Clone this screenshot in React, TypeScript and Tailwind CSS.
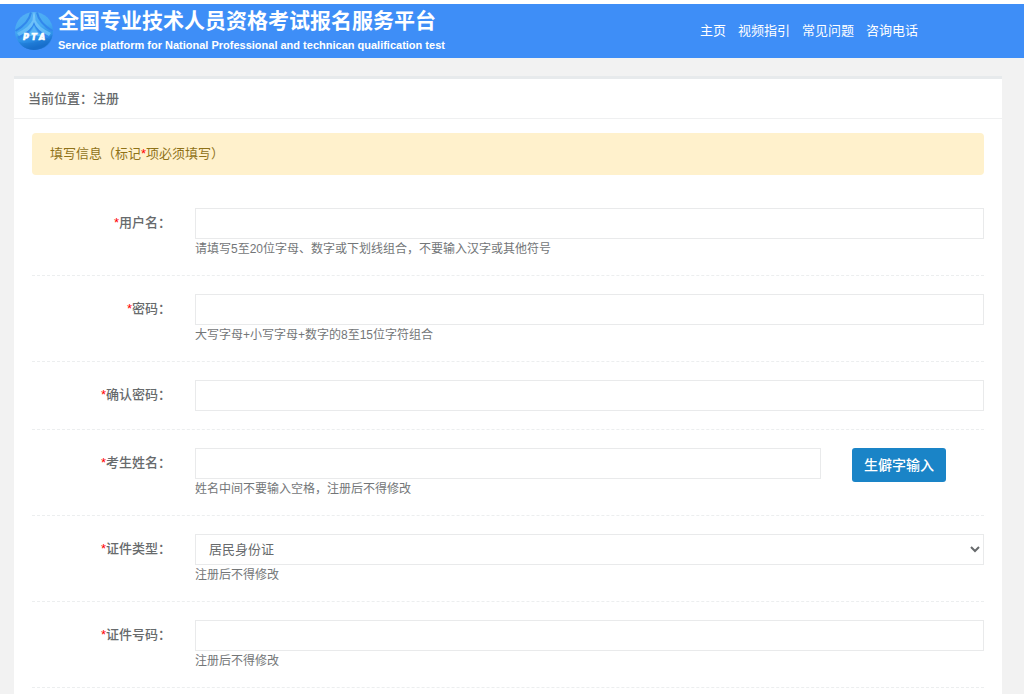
import type { ReactNode } from 'react';

const NAV = ['主页', '视频指引', '常见问题', '咨询电话'];

const CONTROL =
  'block h-[31px] w-full border border-[#e9eaeb] bg-white px-[9px] text-[13px] text-[#676a6c] outline-none focus:border-[#1a84c7]';

function Logo() {
  return (
    <svg viewBox="0 0 40 40" className="h-10 w-10 shrink-0" aria-hidden="true">
      <defs>
        <linearGradient id="disc" x1="0" y1="0" x2="0.25" y2="1">
          <stop offset="0" stopColor="#55b0f5" />
          <stop offset="0.5" stopColor="#45a9f3" />
          <stop offset="0.8" stopColor="#2a8de6" />
          <stop offset="1" stopColor="#1263c0" />
        </linearGradient>
        <linearGradient id="ray" x1="0" y1="0" x2="0" y2="1">
          <stop offset="0" stopColor="#7cc9fa" />
          <stop offset="1" stopColor="#5cb9f7" />
        </linearGradient>
      </defs>
      <circle cx="20" cy="20" r="19" fill="url(#disc)" />
      {/* dark gaps between the beams */}
      <path d="M17 1.500Q15 12 1.500 20M23 1.500Q25 12 38.500 20" fill="none" stroke="#3288ec" strokeWidth="2" />
      <path d="M20 9Q18 20 4 27M20 9Q22 20 36 27" fill="none" stroke="#3288ec" strokeWidth="3" />
      <path d="M20 1Q21 3 21.500 9Q24 16 37 22L35 25Q22 19 20 11Q18 19 5 25L3 22Q16 16 18.500 9Q19 3 20 1Z" fill="url(#ray)" />
      <path d="M20 15Q22 21 29 25H11Q18 21 20 15Z" fill="#58b4f6" />
      <path d="M5 31Q20 36 38.500 24Q37 38 20 39Q10 39 5 31Z" fill="#1d79d6" opacity="0.5" />
      <g
        textAnchor="middle"
        fontFamily="DejaVu Sans, sans-serif"
        fontSize="8"
        fontWeight="700"
        fontStyle="italic"
        fill="#fff"
        stroke="#fff"
        strokeWidth="0.6"
      >
        <text x="12" y="29">P</text>
        <text x="20" y="29">T</text>
        <text x="28" y="29">A</text>
      </g>
    </svg>
  );
}

function Star() {
  return <span className="font-normal text-[#ff0000]">*</span>;
}

function Row({
  id,
  label,
  hint,
  action,
  children,
}: {
  id: string;
  label: string;
  hint?: string;
  action?: ReactNode;
  children: ReactNode;
}) {
  return (
    <div className="grid grid-cols-[163px_1fr] border-b border-dashed border-[#eceeef] pt-[18px]">
      <label htmlFor={id} className="pr-6 text-right leading-[29px] font-medium">
        <Star />
        {label}：
      </label>
      <div className="flex items-start">
        <div className="min-w-0 flex-1">
          {children}
          {hint ? (
            <p id={`${id}-hint`} className="pb-4 text-xs leading-5 text-[#737678]">
              {hint}
            </p>
          ) : (
            <div className="h-[18px]" />
          )}
        </div>
        {action}
      </div>
    </div>
  );
}

export default function App() {
  return (
    <div className="flex min-h-screen flex-col bg-[#f2f2f2] font-['Liberation_Sans','Noto_Sans_CJK_SC',sans-serif] text-[13px] text-[#676a6c]">
      <header className="flex h-[58px] items-center justify-between border-t-4 border-white bg-[#3e8ef7] pr-[106px] pl-3.5 text-white">
        <div className="flex items-center gap-1">
          <Logo />
          <div>
            <h1 className="text-[21px] leading-7 font-bold">全国专业技术人员资格考试报名服务平台</h1>
            <p className="text-[11px] leading-5 font-bold">
              Service platform for National Professional and technican qualification test
            </p>
          </div>
        </div>
        <nav className="flex gap-3">
          {NAV.map((item) => (
            <a key={item} href="#" className="hover:underline">
              {item}
            </a>
          ))}
        </nav>
      </header>

      <main className="mt-[18px] mr-[22px] ml-3.5 flex-1 border-t-[3px] border-[#e7eaec] bg-white">
        <h2 className="border-b border-[#eff0f1] px-3.5 leading-[39px] font-medium">当前位置：注册</h2>
        <form className="px-[18px] pt-3.5" onSubmit={(e) => e.preventDefault()}>
          <div className="mb-[15px] rounded bg-[#fff1cc] px-[18px] leading-[42px] text-[#8f7218]">
            填写信息（标记
            <Star />
            项必须填写）
          </div>

          <Row id="username" label="用户名" hint="请填写5至20位字母、数字或下划线组合，不要输入汉字或其他符号">
            <input id="username" type="text" className={CONTROL} aria-describedby="username-hint" />
          </Row>
          <Row id="password" label="密码" hint="大写字母+小写字母+数字的8至15位字符组合">
            <input id="password" type="password" className={CONTROL} aria-describedby="password-hint" />
          </Row>
          <Row id="confirm" label="确认密码">
            <input id="confirm" type="password" className={CONTROL} />
          </Row>
          <Row
            id="name"
            label="考生姓名"
            hint="姓名中间不要输入空格，注册后不得修改"
            action={
              <button
                type="button"
                className="mr-[38px] ml-[31px] h-[34px] rounded-[3px] bg-[#1a84c7] px-3 text-sm font-medium text-white"
              >
                生僻字输入
              </button>
            }
          >
            <input id="name" type="text" className={CONTROL} aria-describedby="name-hint" />
          </Row>
          <Row id="idType" label="证件类型" hint="注册后不得修改">
            <select id="idType" className={CONTROL} aria-describedby="idType-hint">
              <option>居民身份证</option>
            </select>
          </Row>
          <Row id="idNumber" label="证件号码" hint="注册后不得修改">
            <input id="idNumber" type="text" className={CONTROL} aria-describedby="idNumber-hint" />
          </Row>
        </form>
      </main>
    </div>
  );
}
